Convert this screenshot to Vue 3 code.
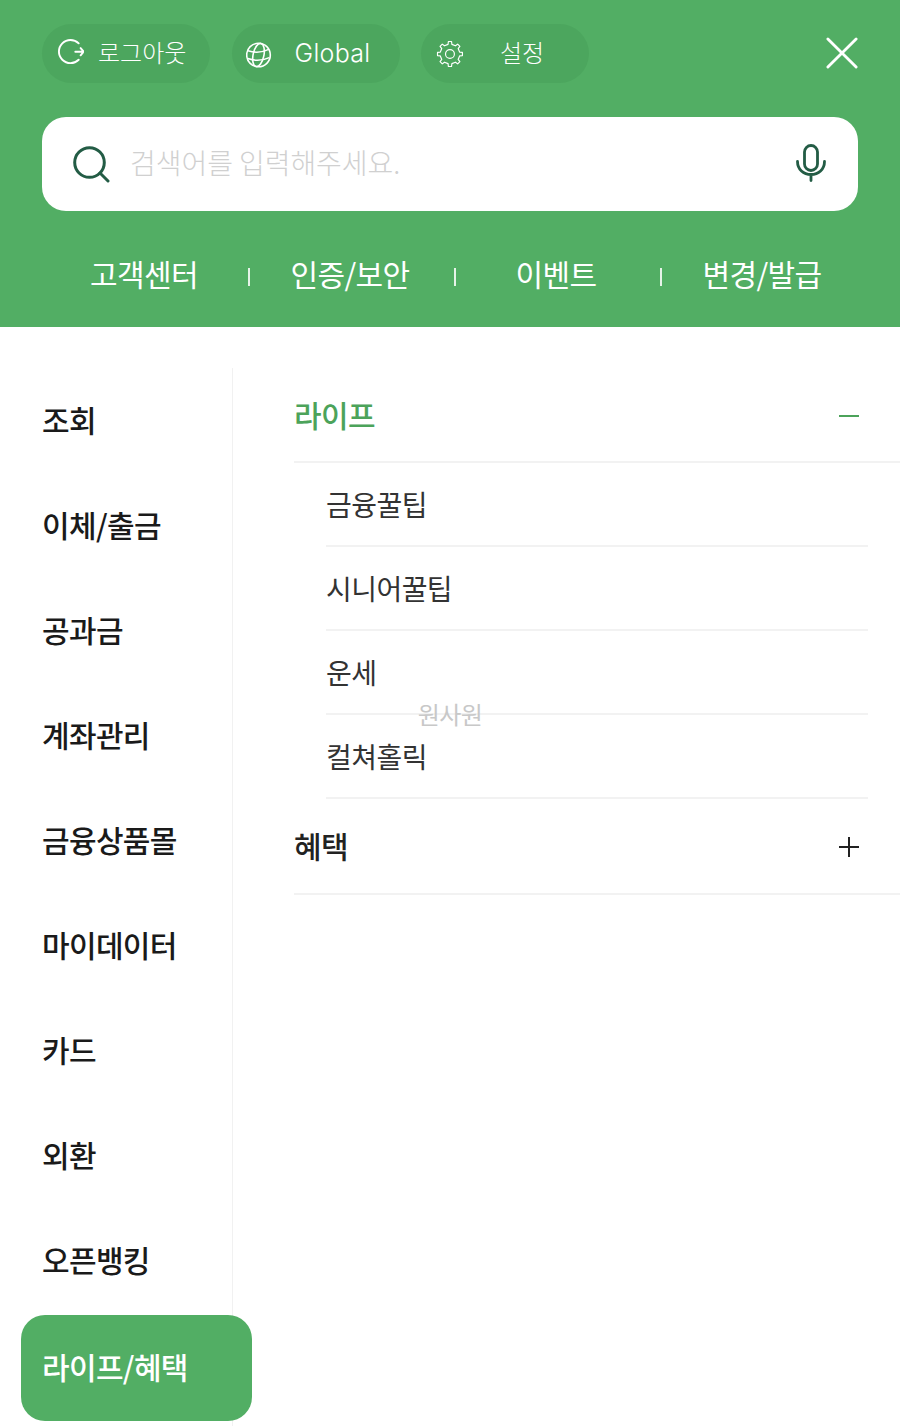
<script setup>
const quickLinks = ['고객센터', '인증/보안', '이벤트', '변경/발급']
const sideMenu = ['조회', '이체/출금', '공과금', '계좌관리', '금융상품몰', '마이데이터', '카드', '외환', '오픈뱅킹', '라이프/혜택']
const lifeItems = ['금융꿀팁', '시니어꿀팁', '운세', '컬쳐홀릭']

// 8-tooth cog outline for the settings icon
function gearPath(cx, cy, outer, inner, teeth) {
  const pts = []
  const step = (Math.PI * 2) / teeth
  for (let i = 0; i < teeth; i++) {
    const a = i * step - Math.PI / 2
    const w = step * 0.2
    pts.push([a - w * 1.25, inner], [a - w * 0.8, outer], [a + w * 0.8, outer], [a + w * 1.25, inner])
  }
  return (
    'M' +
    pts.map(([a, r]) => `${(cx + Math.cos(a) * r).toFixed(2)} ${(cy + Math.sin(a) * r).toFixed(2)}`).join('L') +
    'Z'
  )
}
const gear = gearPath(15.5, 14.5, 13, 10.2, 8)
</script>

<template>
  <div class="page">
    <header class="head">
      <div class="top-row">
        <button class="pill">
          <svg class="pill-icon up" viewBox="0 0 29 28" fill="none" stroke="#fff" stroke-width="2" stroke-linecap="round" stroke-linejoin="round">
            <path d="M23.500 5A12 12 0 1 0 23.500 22" />
            <path d="M20 13.700h8.500M25.500 10l3.200 3.700-3.200 3.700" />
          </svg>
          <span class="pill-text">로그아웃</span>
        </button>
        <button class="pill">
          <svg class="pill-icon" viewBox="0 0 28 28" fill="none" stroke="#fff" stroke-width="1.600">
            <circle cx="12.500" cy="15" r="11.800" />
            <ellipse cx="12.500" cy="15" rx="5.400" ry="11.800" transform="rotate(12 12.500 15)" />
            <path d="M2 10.800c6.400 2 14.400 1.600 20.800-1.400M1.800 18.600c6.800 2.400 15 2 21.400-1" />
          </svg>
          <span class="pill-text wide latin">Global</span>
        </button>
        <button class="pill">
          <svg class="pill-icon" viewBox="0 0 29 29" fill="none" stroke="#fff" stroke-width="1.200" stroke-linejoin="round">
            <path :d="gear" />
            <circle cx="15.500" cy="14.500" r="4.600" />
          </svg>
          <span class="pill-text wide">설정</span>
        </button>
        <svg class="close" viewBox="0 0 34 34" fill="none" stroke="#fff" stroke-width="3" stroke-linecap="round">
          <path d="M2 2l30 30M32 2 2 32" />
        </svg>
      </div>

      <div class="search">
        <svg class="search-icon" viewBox="0 0 38 38" fill="none" stroke="#235c45" stroke-width="3" stroke-linecap="round">
          <circle cx="17.500" cy="17.500" r="14.800" />
          <path d="M28 28l8 8" />
        </svg>
        <span class="placeholder">검색어를 입력해주세요.</span>
        <svg class="mic" viewBox="0 0 30 38" fill="none" stroke="#235c45" stroke-width="2.800" stroke-linecap="round">
          <rect x="8.500" y="1.500" width="13" height="25" rx="6.500" />
          <path d="M1.500 17.500c0 8 6 13 13.500 13s13.500-5 13.500-13M15 30.500v6" />
        </svg>
      </div>

      <nav class="quick">
        <template v-for="(label, i) in quickLinks" :key="label">
          <span v-if="i" class="sep"></span>
          <a class="quick-link">{{ label }}</a>
        </template>
      </nav>
    </header>

    <div class="body">
      <aside class="side">
        <div
          v-for="(item, i) in sideMenu"
          :key="item"
          class="side-item"
          :class="{ active: i === sideMenu.length - 1 }"
        >{{ item }}</div>
      </aside>

      <section class="content">
        <div class="acc-head open">
          <span class="acc-label">라이프</span>
          <svg class="acc-icon" viewBox="0 0 22 22" fill="none" stroke="#4ca35a" stroke-width="2">
            <path d="M1 11h20" />
          </svg>
        </div>
        <ul class="sub">
          <li v-for="item in lifeItems" :key="item">{{ item }}</li>
        </ul>
        <div class="acc-head tall">
          <span class="acc-label">혜택</span>
          <svg class="acc-icon" viewBox="0 0 22 22" fill="none" stroke="#222" stroke-width="2">
            <path d="M1 11h20M11 1v20" />
          </svg>
        </div>
      </section>
    </div>

    <div class="watermark">원사원</div>
  </div>
</template>

<style scoped>
.page {
  position: relative;
  width: 900px;
  height: 1426px;
  background: #fff;
  overflow: hidden;
  font-family: "Noto Sans CJK KR", "Noto Sans", sans-serif;
}
.head {
  height: 327px;
  box-sizing: border-box;
  padding: 24px 42px 0;
  background: #52ae64;
}
.top-row {
  display: flex;
  align-items: center;
  gap: 21.5px;
  height: 59px;
}
.pill {
  display: flex;
  align-items: center;
  width: 168px;
  height: 59px;
  box-sizing: border-box;
  padding: 0 0 0 14px;
  border: 0;
  border-radius: 30px;
  background: #4ca65e;
  color: #fff;
  font: inherit;
}
.pill-icon {
  flex: none;
  width: 28px;
  height: 28px;
}
.pill-icon.up {
  margin-bottom: 3px;
}
.pill-text {
  margin-left: 14px;
  padding-bottom: 4px;
  font-size: 24px;
  font-weight: 300;
  letter-spacing: 0;
  white-space: nowrap;
}
.pill-text.wide {
  flex: 1;
  margin-left: 0;
  padding-right: 8px;
  text-align: center;
}
.pill-text.latin {
  padding-bottom: 2px;
  font-family: Inter, "Noto Sans", sans-serif;
  font-size: 25px;
  letter-spacing: 0.3px;
}
.close {
  width: 32px;
  height: 32px;
  margin-bottom: 2px;
  margin-left: auto;
}
.search {
  display: flex;
  align-items: center;
  height: 94px;
  margin-top: 34px;
  padding: 0 32px 0 30px;
  border-radius: 24px;
  background: #fff;
}
.search-icon {
  flex: none;
  width: 38px;
  height: 38px;
}
.placeholder {
  flex: 1;
  margin-left: 20px;
  padding-bottom: 4px;
  color: #d0d0d0;
  font-size: 28px;
  font-weight: 300;
  letter-spacing: -0.05px;
}
.mic {
  flex: none;
  width: 30px;
  height: 38px;
  margin-bottom: 2px;
}
.quick {
  display: grid;
  grid-template-columns: 204px 2px 204px 2px 204px 2px 204px;
  align-items: center;
  margin: 40px -8px 0 2px;
  height: 46px;
}
.quick-link {
  padding-right: 4px;
  padding-bottom: 8px;
  color: #fff;
  font-size: 30px;
  font-weight: 400;
  letter-spacing: -0.6px;
  text-align: center;
  white-space: nowrap;
}
.sep {
  width: 2px;
  height: 18px;
  background: #e6f3e8;
}
.body {
  display: flex;
  margin-top: 41px;
}
.side {
  flex: none;
  width: 233px;
  box-sizing: border-box;
  height: 1058px;
  border-right: 1px solid #f1f1f1;
}
.side-item {
  display: flex;
  align-items: center;
  height: 105px;
  box-sizing: border-box;
  margin-left: 21px;
  padding: 0 0 3px 21px;
  color: #1a1a1a;
  font-size: 30px;
  font-weight: 500;
  letter-spacing: -0.65px;
  white-space: nowrap;
}
.side-item.active {
  width: 231px;
  height: 106px;
  margin-top: 2px;
  padding-bottom: 5px;
  border-radius: 24px;
  background: #52ae64;
  color: #fff;
}
.content {
  flex: 1;
  padding: 0 0 0 61px;
}
.acc-head {
  display: flex;
  align-items: center;
  justify-content: space-between;
  height: 95px;
  box-sizing: border-box;
  padding-right: 40.5px;
  border-bottom: 2px solid #f2f2f2;
  color: #222;
  font-size: 30px;
  font-weight: 500;
  letter-spacing: -0.6px;
}
.acc-head.tall {
  height: 96px;
}
.acc-head.open {
  color: #4ca35a;
}
.acc-label {
  padding-bottom: 3px;
}
.acc-head.open .acc-label {
  padding-bottom: 1px;
}
.acc-icon {
  width: 22px;
  height: 22px;
  margin-top: 2px;
}
.sub {
  margin: 0 32px 0 32px;
  padding: 0;
  list-style: none;
}
.sub li {
  display: flex;
  align-items: center;
  height: 84px;
  box-sizing: border-box;
  border-bottom: 2px solid #f2f2f2;
  color: #333;
  font-size: 28px;
  font-weight: 400;
  letter-spacing: -0.55px;
}
.watermark {
  position: absolute;
  top: 696px;
  left: 0;
  width: 100%;
  color: #c8c8c8;
  font-size: 24px;
  line-height: 36px;
  letter-spacing: -0.6px;
  text-align: center;
  pointer-events: none;
}
</style>
